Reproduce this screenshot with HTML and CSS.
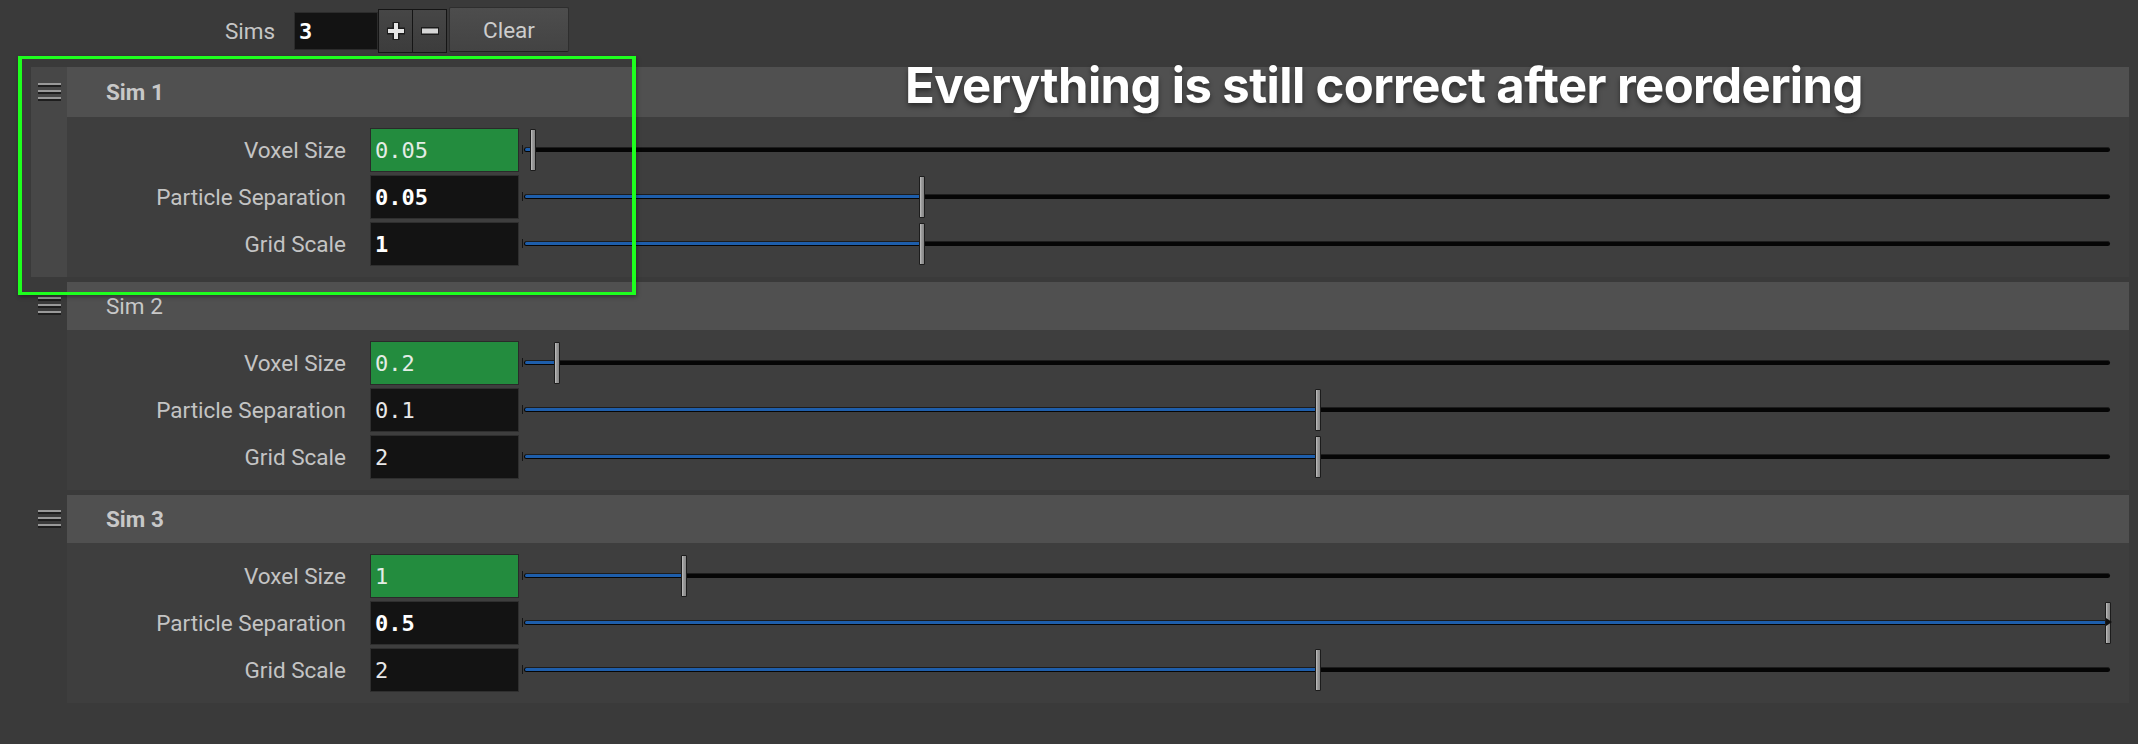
FILE: index.html
```html
<!DOCTYPE html>
<html>
<head>
<meta charset="utf-8">
<title>Sims</title>
<link rel="stylesheet" href="styles.css">
</head>
<body>
<div class="app">
  <div class="toolbar">
    <span class="sims-label">Sims</span>
    <div class="num-field">3</div>
    <div class="stepper">
      <button class="step-btn" aria-label="add">
        <svg width="24" height="24" viewBox="0 0 24 24"><path d="M12 3v18M3 12h18" stroke="#1c1c1c" stroke-width="7" fill="none"/><path d="M12 4v16M4 12h16" stroke="#e4e4e4" stroke-width="4" fill="none"/></svg>
      </button>
      <button class="step-btn" aria-label="remove">
        <svg width="22" height="10" viewBox="0 0 22 10"><path d="M2 5h18" stroke="#1c1c1c" stroke-width="8" fill="none"/><path d="M3 5h16" stroke="#d6d6d6" stroke-width="5" fill="none"/></svg>
      </button>
    </div>
    <button class="clear-btn">Clear</button>
  </div>

  <div class="list">
    <div class="item dragging">
      <div class="grip"><svg class="grip-icon" width="23" height="18" viewBox="0 0 23 18"><rect x="0" y="0" width="23" height="2" fill="#999"/><rect x="0" y="2" width="23" height="2" fill="#1e1e1e"/><rect x="0" y="7" width="23" height="2" fill="#999"/><rect x="0" y="9" width="23" height="2" fill="#1e1e1e"/><rect x="0" y="14" width="23" height="2" fill="#999"/><rect x="0" y="16" width="23" height="2" fill="#1e1e1e"/></svg></div>
      <div class="header"><span class="title bold">Sim 1</span></div>
      <div class="spacer"></div>
      <div class="body">
        <div class="row">
          <span class="label">Voxel Size</span>
          <div class="field green">0.05</div>
          <div class="slider" style="--v:0.5%"><div class="tick"></div><div class="track"><div class="fill"></div></div><div class="knob"></div></div>
        </div>
        <div class="row">
          <span class="label">Particle Separation</span>
          <div class="field bold">0.05</div>
          <div class="slider" style="--v:25%"><div class="tick"></div><div class="track"><div class="fill"></div></div><div class="knob"></div></div>
        </div>
        <div class="row">
          <span class="label">Grid Scale</span>
          <div class="field bold">1</div>
          <div class="slider" style="--v:25%"><div class="tick"></div><div class="track"><div class="fill"></div></div><div class="knob"></div></div>
        </div>
      </div>
    </div>

    <div class="item">
      <div class="grip"><svg class="grip-icon" width="23" height="18" viewBox="0 0 23 18"><rect x="0" y="0" width="23" height="2" fill="#999"/><rect x="0" y="2" width="23" height="2" fill="#1e1e1e"/><rect x="0" y="7" width="23" height="2" fill="#999"/><rect x="0" y="9" width="23" height="2" fill="#1e1e1e"/><rect x="0" y="14" width="23" height="2" fill="#999"/><rect x="0" y="16" width="23" height="2" fill="#1e1e1e"/></svg></div>
      <div class="header"><span class="title">Sim 2</span></div>
      <div class="spacer"></div>
      <div class="body">
        <div class="row">
          <span class="label">Voxel Size</span>
          <div class="field green">0.2</div>
          <div class="slider" style="--v:2%"><div class="tick"></div><div class="track"><div class="fill"></div></div><div class="knob"></div></div>
        </div>
        <div class="row">
          <span class="label">Particle Separation</span>
          <div class="field">0.1</div>
          <div class="slider" style="--v:50%"><div class="tick"></div><div class="track"><div class="fill"></div></div><div class="knob"></div></div>
        </div>
        <div class="row">
          <span class="label">Grid Scale</span>
          <div class="field">2</div>
          <div class="slider" style="--v:50%"><div class="tick"></div><div class="track"><div class="fill"></div></div><div class="knob"></div></div>
        </div>
      </div>
    </div>

    <div class="item">
      <div class="grip"><svg class="grip-icon" width="23" height="18" viewBox="0 0 23 18"><rect x="0" y="0" width="23" height="2" fill="#999"/><rect x="0" y="2" width="23" height="2" fill="#1e1e1e"/><rect x="0" y="7" width="23" height="2" fill="#999"/><rect x="0" y="9" width="23" height="2" fill="#1e1e1e"/><rect x="0" y="14" width="23" height="2" fill="#999"/><rect x="0" y="16" width="23" height="2" fill="#1e1e1e"/></svg></div>
      <div class="header"><span class="title bold">Sim 3</span></div>
      <div class="spacer"></div>
      <div class="body">
        <div class="row">
          <span class="label">Voxel Size</span>
          <div class="field green">1</div>
          <div class="slider" style="--v:10%"><div class="tick"></div><div class="track"><div class="fill"></div></div><div class="knob"></div></div>
        </div>
        <div class="row">
          <span class="label">Particle Separation</span>
          <div class="field bold">0.5</div>
          <div class="slider over" style="--v:100%"><div class="tick"></div><div class="track"><div class="fill"></div></div><div class="knob"></div><div class="arrow"></div></div>
        </div>
        <div class="row">
          <span class="label">Grid Scale</span>
          <div class="field">2</div>
          <div class="slider" style="--v:50%"><div class="tick"></div><div class="track"><div class="fill"></div></div><div class="knob"></div></div>
        </div>
      </div>
    </div>
  </div>

  <div class="highlight-box"></div>
  <div class="caption">Everything is still correct after reordering</div>
</div>
</body>
</html>
```
FILE: styles.css
```css
html, body {
  margin: 0;
  padding: 0;
}
body {
  background: #3a3a3a;
  font-family: Roboto, "Liberation Sans", sans-serif;
  width: 2138px;
  height: 744px;
  overflow: hidden;
}
.app {
  position: relative;
  width: 2138px;
  height: 744px;
}

/* toolbar */
.toolbar {
  display: flex;
  align-items: center;
  height: 62px;
  padding-left: 225px;
  box-sizing: border-box;
}
.sims-label {
  font-size: 22.5px;
  color: #c6c6c6;
  width: 69px;
}
.num-field {
  width: 84px;
  height: 38px;
  box-sizing: border-box;
  background: #131313;
  border: 1px solid #2c2c2c;
  font: bold 22px "DejaVu Sans Mono", monospace;
  color: #fff;
  padding-left: 4px;
  display: flex;
  align-items: center;
}
.stepper {
  display: flex;
  width: 69px;
  height: 44px;
  box-sizing: border-box;
  border: 1px solid #151515;
}
.step-btn {
  flex: 1;
  display: flex;
  align-items: center;
  justify-content: center;
  background: linear-gradient(#464646, #3c3c3c);
  border: 0;
  padding: 0;
  margin: 0;
}
.step-btn + .step-btn {
  border-left: 1px solid #151515;
}
.clear-btn {
  margin-left: 2px;
  margin-top: -3px;
  width: 120px;
  height: 45px;
  box-sizing: border-box;
  background: linear-gradient(#4d4d4d, #434343);
  border: 1px solid #2e2e2e;
  border-bottom-color: #202020;
  border-radius: 2px;
  color: #cdcdcd;
  font: 22.5px Roboto, "Liberation Sans", sans-serif;
  padding: 0;
}

/* list */
.list {
  display: flex;
  flex-direction: column;
  gap: 5px;
  padding: 5px 9px 0 31px;
}
.item {
  display: grid;
  grid-template-columns: 36px 1fr;
  grid-template-rows: 48px 160px;
}
.item.dragging {
  grid-template-rows: 50px 160px;
  background: #474747;
}
.grip {
  display: flex;
  align-items: center;
  justify-content: center;
}
.grip-icon {
  display: block;
}
.header {
  background: #505050;
  display: flex;
  align-items: center;
  padding-left: 39px;
  font-size: 22.5px;
  color: #c8c8c8;
}
.title.bold {
  font-weight: 700;
}
.body {
  background: #3e3e3e;
  padding: 11px 0;
  box-sizing: border-box;
  display: flex;
  flex-direction: column;
  gap: 3px;
}
.row {
  display: flex;
  align-items: center;
  height: 44px;
}
.label {
  width: 279px;
  text-align: right;
  font-size: 22.5px;
  color: #c4c4c4;
  flex: none;
}
.field {
  margin-left: 24px;
  width: 149px;
  height: 44px;
  box-sizing: border-box;
  background: #131313;
  border: 1px solid #2f2f2f;
  display: flex;
  align-items: center;
  padding-left: 4px;
  font: 22px "DejaVu Sans Mono", monospace;
  color: #e8e8e8;
  flex: none;
}
.field.green {
  background: #238c3e;
  border-color: #2a2a2a;
  color: #e4ece6;
}
.field.bold {
  font-weight: bold;
  color: #fff;
}

/* slider */
.slider {
  position: relative;
  flex: 1;
  height: 44px;
  margin-left: 5px;
  margin-right: 19px;
}
.track {
  position: absolute;
  left: 0;
  right: 0;
  top: 19px;
  height: 5px;
  background: #050505;
  border-top: 1px solid #1d1d1d;
  box-sizing: border-box;
  border-radius: 3px;
}
.fill {
  position: absolute;
  left: 1px;
  top: 0;
  bottom: 1px;
  width: var(--v);
  background: #1e5eab;
  border-radius: 2px 0 0 2px;
}
.tick {
  position: absolute;
  left: -2px;
  top: 17px;
  width: 1px;
  height: 9px;
  background: #151515;
}
.knob {
  position: absolute;
  top: 1px;
  left: calc(var(--v) - 2px);
  width: 6px;
  height: 42px;
  box-sizing: border-box;
  background: linear-gradient(to right, #c4c4c4, #9a9a9a 40%, #858585);
  border: 1px solid #1c1c1c;
  border-radius: 1px;
}
.slider.over .knob {
  left: calc(var(--v) - 5px);
}
.arrow {
  position: absolute;
  right: -2px;
  top: 17px;
  width: 0;
  height: 0;
  border-top: 4px solid transparent;
  border-bottom: 4px solid transparent;
  border-left: 6px solid #111;
}

/* annotations */
.highlight-box {
  position: absolute;
  left: 18px;
  top: 56px;
  width: 618px;
  height: 239px;
  box-sizing: border-box;
  border-style: solid;
  border-color: #1eff1e;
  border-width: 3px 4px;
  box-shadow: 1px 2px 4px rgba(0, 0, 0, 0.35);
}
.caption {
  position: absolute;
  left: 905px;
  top: 61px;
  font: 700 49px/49px Inter, Roboto, "Liberation Sans", sans-serif;
  color: #fff;
  white-space: nowrap;
  letter-spacing: -0.6px;
  text-shadow: 0 3px 5px rgba(0, 0, 0, 0.45);
}
```
